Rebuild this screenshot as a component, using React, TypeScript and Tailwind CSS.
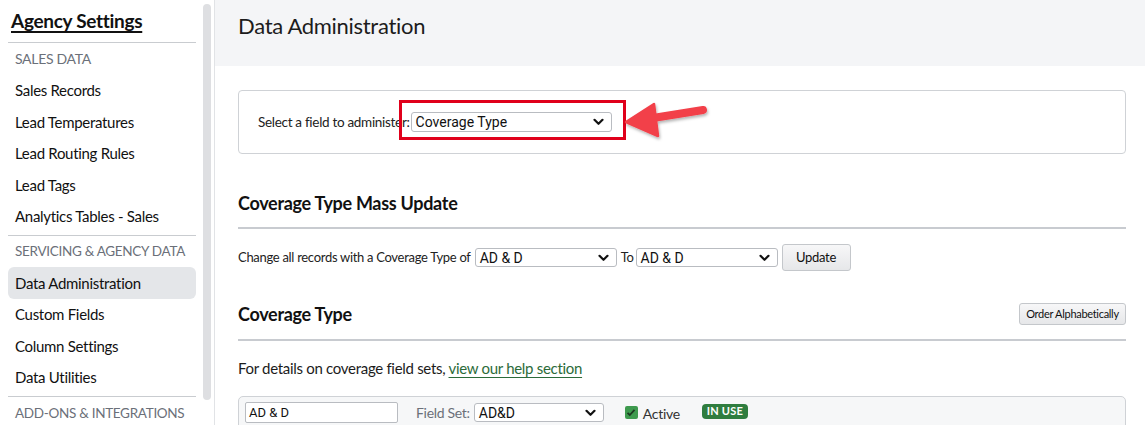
import React from 'react';

const sans = "font-['Lato','Noto_Sans',sans-serif] tracking-[-0.3px]";
const ui = "font-['Roboto','Liberation_Sans',sans-serif] tracking-normal";

const Chevron = () => (
  <svg width="11" height="8" viewBox="0 0 11 8" className="shrink-0">
    <path d="M1.5 1.8 L5.5 5.8 L9.5 1.8" fill="none" stroke="#111" strokeWidth="2.2" strokeLinecap="round" strokeLinejoin="round" />
  </svg>
);

const FakeSelect = ({ value, className }: { value: string; className: string }) => (
  <div
    className={`flex items-center justify-between bg-white border border-[#b9bcc1] rounded-[3px] pl-[4px] pr-[7px] text-[14px] text-[#111] ${ui} ${className}`}
  >
    <span className="leading-none">{value}</span>
    <Chevron />
  </div>
);

const salesItems = ['Sales Records', 'Lead Temperatures', 'Lead Routing Rules', 'Lead Tags', 'Analytics Tables - Sales'];
const servicingItems = ['Data Administration', 'Custom Fields', 'Column Settings', 'Data Utilities'];

const Sidebar = () => (
  <aside className={`relative w-[215px] shrink-0 h-[425px] overflow-hidden bg-white border-r border-[#e1e3e6] ${sans}`}>
    {/* Scrollbar track */}
    <div className="absolute right-[3px] top-[4px] w-[8px] h-[396px] rounded-full bg-[#dedfe2]" />
    <div className="pl-[8px] pr-[18px]">
      <h1 className="pl-[3px] pt-[7px] pb-[6px] text-[19px] font-bold text-[#111] underline underline-offset-[3px] decoration-[1.5px]">
        Agency Settings
      </h1>
      <div className="border-t border-[#c9ccd0]" />
      <div className="pl-[7px] h-[32px] flex items-center text-[14px] text-[#6b7079] uppercase whitespace-nowrap">Sales Data</div>
      {salesItems.map((item) => (
        <div key={item} className="pl-[7px] h-[31.5px] flex items-center text-[15px] text-[#111] whitespace-nowrap">
          {item}
        </div>
      ))}
      <div className="mt-[3px] border-t border-[#c9ccd0]" />
      <div className="pl-[7px] h-[31px] flex items-center text-[13.5px] text-[#6b7079] uppercase whitespace-nowrap">
        Servicing &amp; Agency Data
      </div>
      {servicingItems.map((item) => (
        <div
          key={item}
          className={`pl-[7px] h-[31.5px] flex items-center text-[15px] text-[#111] rounded-[6px] whitespace-nowrap ${
            item === 'Data Administration' ? 'bg-[#e4e6e9]' : ''
          }`}
        >
          {item}
        </div>
      ))}
      <div className="mt-[3px] border-t border-[#c9ccd0]" />
      <div className="pl-[7px] h-[33px] flex items-center text-[13.5px] text-[#6b7079] uppercase whitespace-nowrap">
        Add-ons &amp; Integrations
      </div>
    </div>
  </aside>
);

const Arrow = () => (
  <svg width="100" height="50" viewBox="0 0 100 50" className="absolute left-[210px] top-[-14px] pointer-events-none">
    <defs>
      <filter id="sh" x="-20%" y="-20%" width="140%" height="140%">
        <feDropShadow dx="1" dy="2" stdDeviation="1.5" floodColor="#000" floodOpacity="0.3" />
      </filter>
    </defs>
    <g filter="url(#sh)">
      <path d="M82 12 L32 20" stroke="#f2404a" strokeWidth="8" strokeLinecap="round" fill="none" />
      <path d="M5 24 L33 6 L37 38 Z" fill="#f2404a" strokeLinejoin="round" stroke="#f2404a" strokeWidth="2.5" />
    </g>
  </svg>
);

export default function App() {
  return (
    <div className={`flex w-[1145px] h-[425px] overflow-hidden bg-white ${sans}`}>
      <Sidebar />
      <main className="flex-1 min-w-0">
        <header className="h-[66px] bg-[#f4f5f7] pl-[23px] flex items-center">
          <h2 className="text-[22px] text-[#1c1c1c] -mt-[15px]">Data Administration</h2>
        </header>

        <div className="pl-[23px] pr-[19px] pt-[24px]">
          {/* Field picker */}
          <div className="h-[64px] border border-[#cfd2d6] rounded-[4px] pl-[19px] flex items-center">
            <span className="text-[13.5px] text-[#222]">Select a field to administer:</span>
            <div className="relative ml-[1px]">
              <FakeSelect value="Coverage Type" className="w-[201px] h-[20px]" />
              <div className="absolute left-[-12px] top-[-12px] w-[227px] h-[40px] border-[3px] border-[#e0001b] pointer-events-none" />
              <Arrow />
            </div>
          </div>

          {/* Mass update */}
          <h3 className="mt-[37px] text-[18px] font-bold text-[#111] leading-[24px]">Coverage Type Mass Update</h3>
          <div className="mt-[12px] border-t-2 border-[#c8cbd0]" />
          <div className="mt-[15px] flex items-center text-[13px] text-[#222]">
            <span>Change all records with a Coverage Type of</span>
            <FakeSelect value="AD & D" className="ml-[4px] w-[142px] h-[19px]" />
            <span className="ml-[4px]">To</span>
            <FakeSelect value="AD & D" className="ml-[2px] w-[142px] h-[19px]" />
            <button className="ml-[4px] w-[69px] h-[27px] rounded-[3px] border border-[#c4c7cb] bg-gradient-to-b from-[#f7f7f8] to-[#e6e7e9] text-[13px] text-[#111]">
              Update
            </button>
          </div>

          {/* Coverage type list */}
          <div className="mt-[31px] flex items-center justify-between">
            <h3 className="text-[18px] font-bold text-[#111] leading-[24px]">Coverage Type</h3>
            <button className="w-[107px] h-[22px] rounded-[3px] border border-[#c4c7cb] bg-gradient-to-b from-[#f7f7f8] to-[#e6e7e9] text-[11px] text-[#111]">
              Order Alphabetically
            </button>
          </div>
          <div className="mt-[13px] border-t-2 border-[#c8cbd0]" />
          <p className="mt-[16px] text-[15px] text-[#1c1c1c]">
            For details on coverage field sets,{' '}
            <a className="text-[#2c6b3a] underline underline-offset-[3px]" href="#">
              view our help section
            </a>
          </p>

          <div className="mt-[16px] h-[40px] border border-[#cfd2d6] rounded-t-[5px] bg-[#f6f7f8] pl-[6px] pt-[5px]">
            <div className="h-[22px] flex items-center">
              <div className={`w-[153px] h-[21px] bg-white border border-[#b9bcc1] rounded-[2px] pl-[3px] flex items-center text-[13px] text-[#111] ${ui}`}>
                AD &amp; D
              </div>
              <span className="ml-[18px] text-[14px] text-[#6b7079]">Field Set:</span>
              <FakeSelect value="AD&D" className="ml-[4px] w-[130px] h-[19px]" />
              <div className="ml-[21px] w-[13px] h-[13px] rounded-[2px] bg-[#3e9a4e] flex items-center justify-center">
                <svg width="10" height="9" viewBox="0 0 10 9">
                  <path d="M1.5 4.8 L3.8 7 L8.5 1.8" fill="none" stroke="#1d3a22" strokeWidth="1.8" />
                </svg>
              </div>
              <span className="ml-[5px] mt-[2px] text-[14px] text-[#333]">Active</span>
              <span className="ml-[22px] -mt-[2px] h-[15px] px-[5px] rounded-[4px] bg-[#2f7d3f] text-white text-[11px] font-bold tracking-[0.2px] flex items-center">
                IN USE
              </span>
            </div>
          </div>
        </div>
      </main>
    </div>
  );
}
